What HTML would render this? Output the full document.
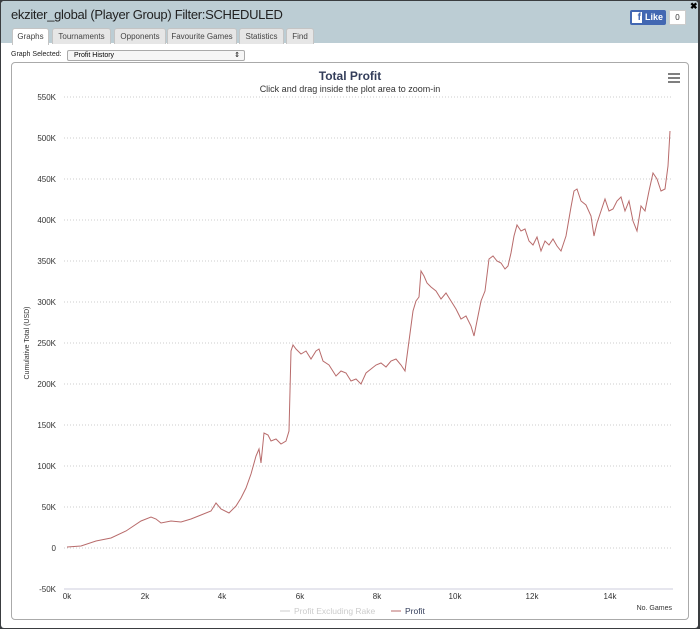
<!DOCTYPE html>
<html><head><meta charset="utf-8"><style>
*{margin:0;padding:0;box-sizing:border-box}
body{width:700px;height:629px;background:#3a3d40;font-family:"Liberation Sans",sans-serif;position:relative;overflow:hidden}
#win{position:absolute;left:1px;top:1px;width:697px;height:627px;background:#fff;border-radius:3px;overflow:hidden}
#hdr{position:absolute;left:0;top:0;width:100%;height:42px;background:#bccdd4}
#title{position:absolute;left:10px;top:6px;font-size:13px;letter-spacing:-0.3px;color:#222}
.tab{position:absolute;top:27px;height:16px;background:#e6e6e6;border:1px solid #c4c4c4;border-bottom:none;font-size:8px;color:#444;text-align:center;line-height:15px;border-radius:3px 3px 0 0}
.tab.on{background:#fff;height:17px}
#fb{position:absolute;left:629px;top:9px;width:36px;height:15px;background:#4267b2;border-radius:2px;color:#fff;font-size:9px;font-weight:bold;line-height:15px;padding-left:15px}
#fb i{position:absolute;left:2px;top:2px;width:10px;height:11px;background:#fff;color:#4267b2;font-style:normal;font-size:10px;line-height:12px;text-align:right;padding-right:1px}
#cnt{position:absolute;left:668px;top:9px;width:17px;height:15px;background:#fff;border:1px solid #ccc;font-size:8px;text-align:center;line-height:13px;color:#333}
#x{position:absolute;left:689px;top:0;font-size:9px;color:#000;font-weight:bold}
#gs{position:absolute;left:10px;top:50px;font-size:7px;color:#222}
#sel{position:absolute;left:66px;top:49px;width:178px;height:11px;border:1px solid #aaa;border-radius:2px;font-size:7px;padding-left:6px;line-height:9px;background:#f6f6f6}
#box{position:absolute;left:10px;top:61px;width:678px;height:558px;border:1px solid #aaa;border-radius:4px;background:#fff}
</style></head><body>
<div id="win">
<div id="hdr"></div>
<div id="title">ekziter_global (Player Group) Filter:SCHEDULED</div>
<div class="tab on" style="left:11px;width:37px">Graphs</div>
<div class="tab" style="left:51px;width:59px">Tournaments</div>
<div class="tab" style="left:113px;width:52px">Opponents</div>
<div class="tab" style="left:166px;width:70px">Favourite Games</div>
<div class="tab" style="left:238px;width:45px">Statistics</div>
<div class="tab" style="left:285px;width:28px">Find</div>
<div id="fb"><i>f</i>Like</div><div id="cnt">0</div>
<div id="x">✖</div>
<div id="gs">Graph Selected:</div>
<div id="sel">Profit History<span style="position:absolute;right:4px">⇕</span></div>
<div id="box"></div>
<svg style="position:absolute;left:0;top:0" width="700" height="629" font-family="Liberation Sans,sans-serif">
<text x="349" y="79" font-size="12" fill="#333d5a" text-anchor="middle" font-weight="bold">Total Profit</text>
<text x="349" y="91" font-size="9" fill="#333" text-anchor="middle">Click and drag inside the plot area to zoom-in</text>
<g stroke="#555" stroke-width="1.6"><line x1="667" y1="73" x2="679" y2="73"/><line x1="667" y1="77" x2="679" y2="77"/><line x1="667" y1="81" x2="679" y2="81"/></g>
<g stroke="#ccc" stroke-dasharray="1,2" stroke-width="1">
<line x1="63" y1="96" x2="672" y2="96"/><line x1="63" y1="137" x2="672" y2="137"/><line x1="63" y1="178" x2="672" y2="178"/><line x1="63" y1="219" x2="672" y2="219"/><line x1="63" y1="260" x2="672" y2="260"/><line x1="63" y1="301" x2="672" y2="301"/><line x1="63" y1="342" x2="672" y2="342"/><line x1="63" y1="383" x2="672" y2="383"/><line x1="63" y1="424" x2="672" y2="424"/><line x1="63" y1="465" x2="672" y2="465"/><line x1="63" y1="506" x2="672" y2="506"/><line x1="63" y1="547" x2="672" y2="547"/></g>
<line x1="63" y1="588" x2="672" y2="588" stroke="#ccd" />
<g font-size="8" fill="#333" text-anchor="end">
<text x="55" y="99">550K</text><text x="55" y="140">500K</text><text x="55" y="181">450K</text><text x="55" y="222">400K</text><text x="55" y="263">350K</text><text x="55" y="304">300K</text><text x="55" y="345">250K</text><text x="55" y="386">200K</text><text x="55" y="427">150K</text><text x="55" y="468">100K</text><text x="55" y="509">50K</text><text x="55" y="550">0</text><text x="55" y="591">-50K</text></g>
<g font-size="8" fill="#333" text-anchor="middle">
<text x="66" y="598">0k</text><text x="144" y="598">2k</text><text x="221" y="598">4k</text><text x="299" y="598">6k</text><text x="376" y="598">8k</text><text x="454" y="598">10k</text><text x="531" y="598">12k</text><text x="609" y="598">14k</text></g>
<text x="671" y="609" font-size="7" fill="#333" text-anchor="end">No. Games</text>
<text transform="translate(28,342) rotate(-90)" font-size="7" fill="#333" text-anchor="middle">Cumulative Total (USD)</text>
<line x1="279" y1="610" x2="289" y2="610" stroke="#ccc"/><text x="293" y="613" font-size="8.5" fill="#ccc">Profit Excluding Rake</text>
<line x1="390" y1="610" x2="400" y2="610" stroke="#b86b6b"/><text x="404" y="613" font-size="8.5" fill="#333d5a">Profit</text>
<polyline fill="none" stroke="#b86b6b" stroke-width="1" points="66,546 80,545 95,540 110,537 125,530 140,520 150,516 155,518 160,522 170,520 180,521 190,518 200,514 210,510 215,502 220,508 228,512 235,505 240,497 245,487 250,473 255,455 258,448 260,462 263,432 267,434 270,440 275,438 280,443 285,440 288,430 290,350 292,344 295,348 300,353 305,350 310,358 315,350 318,348 322,360 328,364 335,375 340,370 345,372 350,380 355,378 360,383 365,372 370,368 375,364 380,362 385,366 390,360 395,358 400,364 404,370 408,340 412,310 415,300 418,296 420,270 423,275 426,282 430,286 435,290 440,298 445,292 450,300 455,308 460,318 465,315 470,325 473,335 476,320 480,300 484,290 488,258 492,255 496,260 500,262 504,268 507,265 510,252 513,235 516,224 520,230 524,228 528,240 532,244 536,236 540,250 544,240 548,244 552,238 556,245 560,250 565,235 570,206 573,190 576,188 580,200 585,204 590,215 593,235 596,222 600,210 604,198 608,210 612,208 616,200 620,196 624,210 628,200 632,220 636,230 640,205 644,210 648,190 652,172 656,178 660,190 664,188 667,165 669,130"/>
</svg>
</div>
</body></html>
